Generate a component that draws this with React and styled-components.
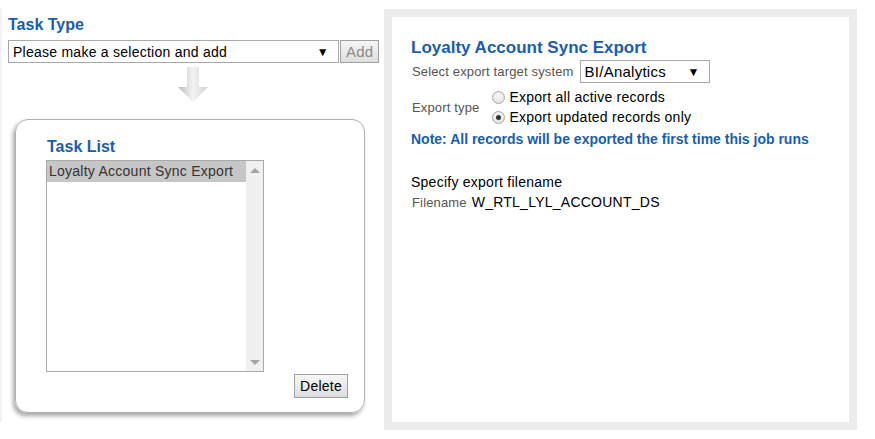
import React from "react";
import styled, { createGlobalStyle } from "styled-components";

const GlobalStyle = createGlobalStyle`
  html, body {
    margin: 0;
    padding: 0;
    background: #fff;
    font-family: "Liberation Sans", Arial, sans-serif;
    letter-spacing: 0.25px;
  }
`;

const Page = styled.div`
  display: flex;
  align-items: flex-start;
  width: 875px;
  height: 439px;
`;

const LeftColumn = styled.div`
  width: 376px;
  margin-top: 8px;
  padding: 7px 0 0 6px;
  height: 407px;
  border-left: 2px solid #f2f2f2;
  display: flex;
  flex-direction: column;
`;

const SectionTitle = styled.div`
  color: #1a5ea8;
  font-size: 16px;
  font-weight: bold;
  line-height: 19px;
  letter-spacing: 0;
`;

const SelectRow = styled.div`
  display: flex;
  margin-top: 6px;
`;

const FakeSelect = styled.div`
  box-sizing: border-box;
  width: ${props => props.width}px;
  height: 23px;
  border: 1px solid #a9a9a9;
  background: #fff;
  display: flex;
  align-items: center;
  justify-content: space-between;
  padding: 0 9px 0 4px;
  font-size: ${props => props.fontSize || 14}px;
  color: #000;

  span.caret {
    font-size: 12px;
  }
`;

const Button = styled.div`
  box-sizing: border-box;
  height: ${props => props.height || 23}px;
  padding: 0 5px;
  border: 1px solid #a0a0a0;
  background: linear-gradient(#f6f6f6, #dedede);
  color: ${props => (props.disabled ? "#8a8a8a" : "#000")};
  font-size: ${props => props.fontSize || 14}px;
  display: flex;
  align-items: center;
  justify-content: center;
  margin-left: 1px;
`;

const ArrowWrap = styled.div`
  display: flex;
  justify-content: center;
  margin-top: 4px;
  width: 370px;
`;

const TaskBox = styled.div`
  box-sizing: border-box;
  margin: 16px 0 0 7px;
  width: 350px;
  height: 294px;
  border: 1px solid #b0b0b0;
  border-radius: 13px;
  box-shadow: -2px 3px 4px rgba(0, 0, 0, 0.35);
  padding: 17px 16px 0 31px;
  display: flex;
  flex-direction: column;
`;

const ListBox = styled.div`
  box-sizing: border-box;
  margin: 4px 0 0 -1px;
  width: 218px;
  height: 212px;
  border: 1px solid #a9a9a9;
  display: flex;
`;

const ListItems = styled.div`
  flex: 1;
`;

const ListItem = styled.div`
  height: 21px;
  line-height: 21px;
  padding-left: 2px;
  font-size: 14px;
  color: #333;
  background: ${props => (props.selected ? "#c6c6c6" : "transparent")};
  white-space: nowrap;
`;

const ScrollBar = styled.div`
  width: 17px;
  background: #f0f0f0;
  display: flex;
  flex-direction: column;
  justify-content: space-between;
  align-items: center;
  padding: 7px 0 6px;
`;

const Tri = styled.div`
  width: 0;
  height: 0;
  border-left: 5px solid transparent;
  border-right: 5px solid transparent;
  ${props =>
    props.down
      ? "border-top: 5px solid #a3a3a3;"
      : "border-bottom: 5px solid #a3a3a3;"}
`;

const BoxFooter = styled.div`
  display: flex;
  justify-content: flex-end;
  margin-top: 2px;
`;

const RightPanel = styled.div`
  margin-top: 9px;
  width: 473px;
  height: 421px;
  box-sizing: border-box;
  border: 8px solid #ececec;
  padding: 21px 19px;
  display: flex;
  flex-direction: column;
`;

const PanelTitle = styled.div`
  color: #1a5ea8;
  font-size: 17px;
  font-weight: bold;
  line-height: 20px;
  letter-spacing: 0;
`;

const FormRow = styled.div`
  display: flex;
  align-items: center;
  gap: ${props => props.gap || 6}px;
  margin-top: ${props => props.top || 0}px;
  padding-left: 1px;
`;

const Label = styled.div`
  color: #555;
  font-size: 13px;
  letter-spacing: 0.15px;
`;

const Value = styled.div`
  color: #000;
  font-size: 14px;
  line-height: 16px;
`;

const RadioGroup = styled.div`
  display: flex;
  flex-direction: column;
  gap: 4px;
`;

const RadioLine = styled.div`
  display: flex;
  align-items: center;
  gap: 4px;
  font-size: 14px;
  color: #000;
  height: 16px;
`;

const RadioDot = styled.div`
  box-sizing: border-box;
  width: 13px;
  height: 13px;
  border-radius: 50%;
  border: 1px solid #a8a8a8;
  background: radial-gradient(circle at 50% 35%, #fafafa, #dcdcdc);
  display: flex;
  align-items: center;
  justify-content: center;

  &::after {
    content: "";
    display: ${props => (props.checked ? "block" : "none")};
    width: 5px;
    height: 5px;
    border-radius: 50%;
    background: #333;
  }
`;

const Note = styled.div`
  color: #1a5ea8;
  font-size: 14px;
  line-height: 16px;
  font-weight: bold;
  letter-spacing: 0;
  margin-top: 6px;
`;

const Plain = styled.div`
  font-size: 14px;
  line-height: 16px;
  color: #000;
  margin-top: ${props => props.top || 0}px;
`;

const DownArrow = () => (
  <svg width="32" height="36" viewBox="0 0 32 36">
    <defs>
      <linearGradient id="ag" x1="0" y1="0" x2="1" y2="0">
        <stop offset="0" stopColor="#bcbcbc" />
        <stop offset="0.5" stopColor="#f4f4f4" />
        <stop offset="1" stopColor="#cfcfcf" />
      </linearGradient>
    </defs>
    <path d="M10 0 H22 V20 H31 L16 35 L1 20 H10 Z" fill="url(#ag)" />
  </svg>
);

const App = () => (
  <Page>
    <GlobalStyle />
    <LeftColumn>
      <SectionTitle>Task Type</SectionTitle>
      <SelectRow>
        <FakeSelect width={331}>
          Please make a selection and add
          <span className="caret">▼</span>
        </FakeSelect>
        <Button disabled fontSize={15}>Add</Button>
      </SelectRow>
      <ArrowWrap>
        <DownArrow />
      </ArrowWrap>
      <TaskBox>
        <SectionTitle>Task List</SectionTitle>
        <ListBox>
          <ListItems>
            <ListItem selected>Loyalty Account Sync Export</ListItem>
          </ListItems>
          <ScrollBar>
            <Tri />
            <Tri down />
          </ScrollBar>
        </ListBox>
        <BoxFooter>
          <Button height={24}>Delete</Button>
        </BoxFooter>
      </TaskBox>
    </LeftColumn>
    <RightPanel>
      <PanelTitle>Loyalty Account Sync Export</PanelTitle>
      <FormRow top={2}>
        <Label>Select export target system</Label>
        <FakeSelect width={130} fontSize={15}>
          BI/Analytics
          <span className="caret">▼</span>
        </FakeSelect>
      </FormRow>
      <FormRow top={6} gap={13}>
        <Label>Export type</Label>
        <RadioGroup>
          <RadioLine>
            <RadioDot />
            Export all active records
          </RadioLine>
          <RadioLine>
            <RadioDot checked />
            Export updated records only
          </RadioLine>
        </RadioGroup>
      </FormRow>
      <Note>Note: All records will be exported the first time this job runs</Note>
      <Plain top={27}>Specify export filename</Plain>
      <FormRow top={4} gap={5}>
        <Label>Filename</Label>
        <Value>W_RTL_LYL_ACCOUNT_DS</Value>
      </FormRow>
    </RightPanel>
  </Page>
);

export default App;
